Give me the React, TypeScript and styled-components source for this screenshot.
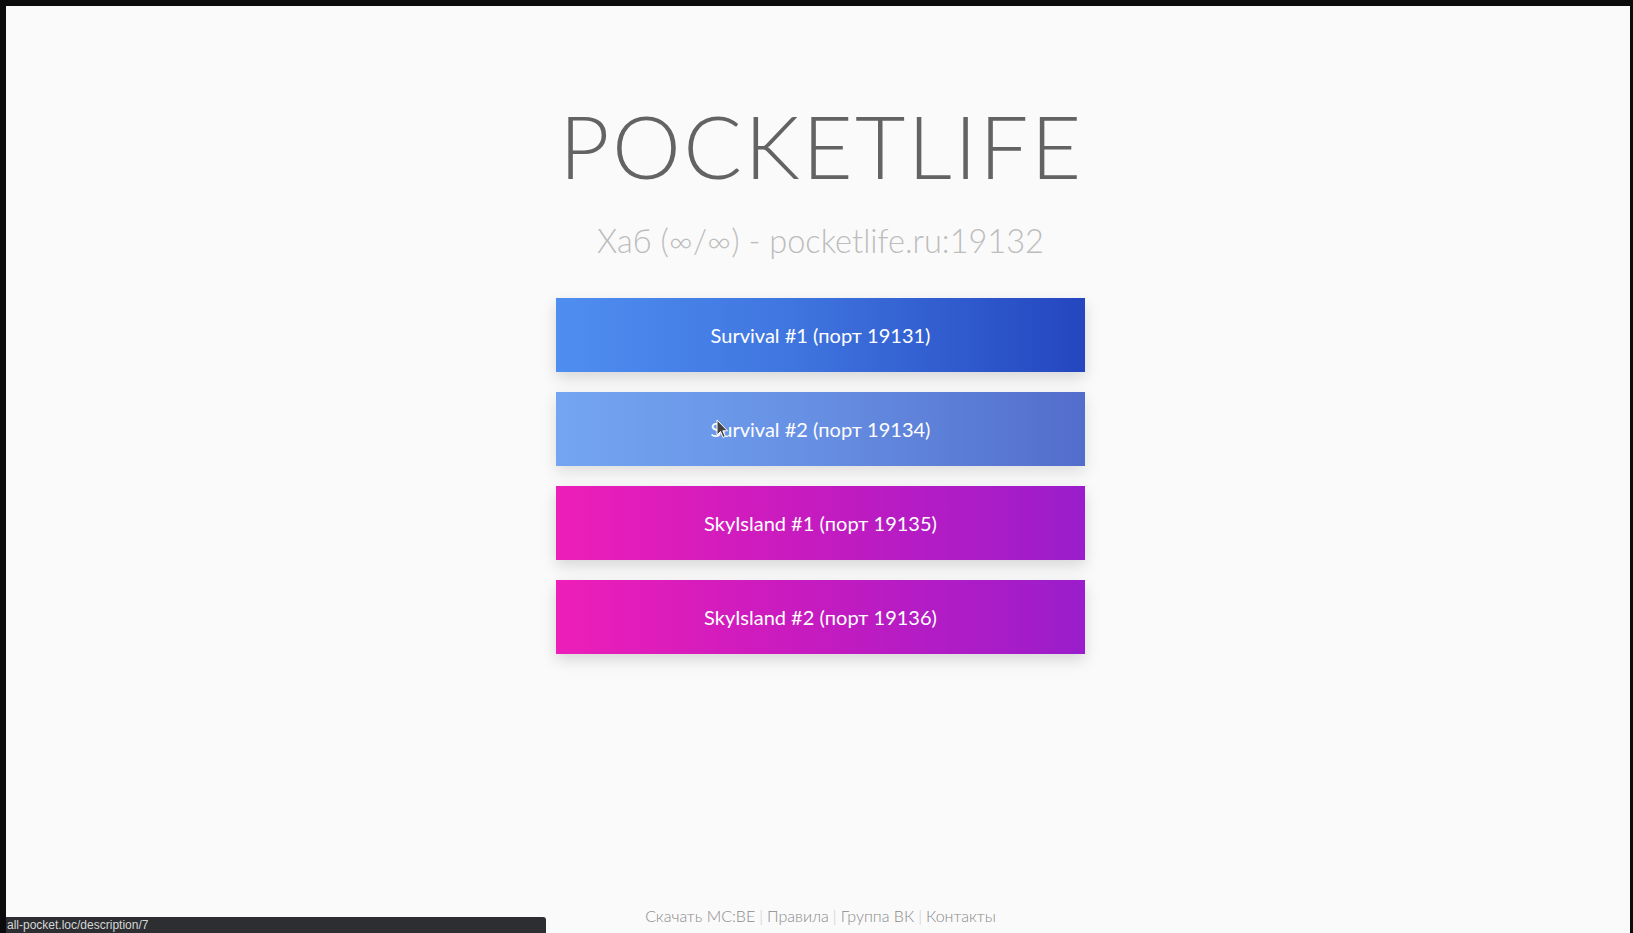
import React from "react";
import styled, { createGlobalStyle } from "styled-components";

const GlobalStyle = createGlobalStyle`
  html, body {
    margin: 0;
    padding: 0;
    height: 100%;
    background: #0b0b0b;
  }
  #root {
    height: 100%;
  }
`;

type Server = { name: string; port: number; kind: "blue" | "pink"; hover?: boolean };

const servers: Server[] = [
  { name: "Survival #1", port: 19131, kind: "blue" },
  { name: "Survival #2", port: 19134, kind: "blue", hover: true },
  { name: "SkyIsland #1", port: 19135, kind: "pink" },
  { name: "SkyIsland #2", port: 19136, kind: "pink" },
];

const gradients = {
  blue: "linear-gradient(to right, #4f8ef1 0%, #3f75df 45%, #2446bf 100%)",
  pink: "linear-gradient(to right, #ee1eb8 0%, #c81bbf 45%, #9a1dcb 100%)",
};

const Frame = styled.div`
  box-sizing: border-box;
  margin: 6px 0 0 6px;
  padding-left: 5px;
  border-right: 3px solid #0b0b0b;
  height: calc(100vh - 6px);
  background: #fafafa;
  display: flex;
  flex-direction: column;
  align-items: center;
  font-family: Lato, "Noto Sans", sans-serif;
  position: relative;
  overflow: hidden;
`;

const Title = styled.h1`
  margin: 96px 0 0;
  padding-left: 2px;
  font-size: 87px;
  font-weight: 300;
  letter-spacing: 2.4px;
  line-height: 1;
  color: #636363;
`;

const Subtitle = styled.h2`
  margin: 36px 0 0;
  font-size: 32.5px;
  font-weight: 300;
  line-height: 1;
  color: #bdbdbd;
`;

const List = styled.div`
  margin-top: 40px;
  width: 529px;
  display: flex;
  flex-direction: column;
  gap: 20px;
`;

const ServerButton = styled.a<{ $kind: "blue" | "pink"; $hover?: boolean }>`
  height: 74px;
  display: flex;
  align-items: center;
  justify-content: center;
  background: ${(p) => gradients[p.$kind]};
  opacity: ${(p) => (p.$hover ? 0.78 : 1)};
  box-shadow: 0 6px 14px rgba(0, 0, 0, 0.14);
  color: #fff;
  font-size: 20px;
  font-weight: 400;
  text-decoration: none;
  cursor: pointer;
  position: relative;
`;

const Cursor = styled.svg`
  position: absolute;
  left: 160px;
  top: 27px;
`;

const Footer = styled.footer`
  margin-top: auto;
  padding-bottom: 8px;
  font-size: 16px;
  font-weight: 300;
  color: #8a8a8a;
`;

const FooterLink = styled.a`
  color: #8a8a8a;
  text-decoration: none;
`;

const Sep = styled.span`
  color: #c8c8c8;
  margin: 0 4px;
`;

const StatusBar = styled.div`
  position: fixed;
  left: 6px;
  bottom: 0;
  width: 540px;
  height: 16px;
  box-sizing: border-box;
  padding-left: 1px;
  background: #2c2e32;
  border-top-right-radius: 3px;
  color: #d6d6d6;
  font-family: "Liberation Sans", Arial, sans-serif;
  font-size: 12px;
  line-height: 17px;
  white-space: nowrap;
  overflow: hidden;
`;

const footerLinks = ["Скачать MC:BE", "Правила", "Группа ВК", "Контакты"];

const App: React.FC = () => {
  return (
    <>
      <GlobalStyle />
      <Frame>
        <Title>POCKETLIFE</Title>
        <Subtitle>Хаб (∞/∞) - pocketlife.ru:19132</Subtitle>
        <List>
          {servers.map((s) => (
            <ServerButton key={s.port} $kind={s.kind} $hover={s.hover}>
              {s.name} (порт {s.port})
              {s.hover && (
                <Cursor width="13" height="20" viewBox="0 0 13 20">
                  <path
                    d="M1 1 L1 16 L4.5 12.5 L7 18.5 L9.3 17.5 L6.8 11.8 L11.5 11.8 Z"
                    fill="#111"
                    stroke="#fff"
                    strokeWidth="1"
                    strokeLinejoin="round"
                  />
                </Cursor>
              )}
            </ServerButton>
          ))}
        </List>
        <Footer>
          {footerLinks.map((l, i) => (
            <React.Fragment key={l}>
              {i > 0 && <Sep>|</Sep>}
              <FooterLink>{l}</FooterLink>
            </React.Fragment>
          ))}
        </Footer>
      </Frame>
      <StatusBar>all-pocket.loc/description/7</StatusBar>
    </>
  );
};

export default App;
